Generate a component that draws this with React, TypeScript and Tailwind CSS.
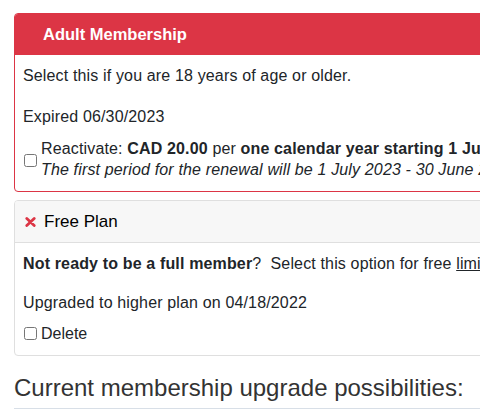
import React from "react";

export default function App() {
  return (
    <div className="w-[480px] h-[409px] overflow-hidden bg-white text-[#212529] text-[16px] leading-[21px]" style={{ fontFamily: '"Liberation Sans", Arial, sans-serif' }}>
      <div className="pl-[14px] pt-[13px] w-[640px]">
        <div className="border border-[#dc3545] rounded-[4px] overflow-hidden">
          <div className="bg-[#dc3545] text-white font-bold text-[16.5px] h-[41px] flex items-center pl-[28px]">
            Adult Membership
          </div>
          <div className="px-[8px] pt-[10px] pb-[11px]">
            <p className="tracking-[0.15px]">Select this if you are 18 years of age or older.</p>
            <p className="mt-[20px] tracking-[0.15px]">Expired 06/30/2023</p>
            <label className="mt-[11px] flex items-center gap-[4px]">
              <input type="checkbox" className="w-[13px] h-[13px] ml-[1px] mt-[2px] shrink-0" />
              <span className="block whitespace-nowrap tracking-[0.15px]">
                Reactivate: <b>CAD 20.00</b> per <b>one calendar year starting 1 July</b>
                <br />
                <i>The first period for the renewal will be 1 July 2023 - 30 June 2024</i>
              </span>
            </label>
          </div>
        </div>

        <div className="mt-[8px] border border-[#dfdfdf] rounded-[4px] overflow-hidden">
          <div className="bg-[#f7f7f7] border-b border-[#dfdfdf] h-[42px] flex items-center pl-[9px] text-[17px] text-black">
            <svg width="11" height="10" viewBox="0 0 11 10" className="mr-[8px] ml-[1px] mt-[1px]">
              <path d="M1.8 1.5 L9.2 8.5 M9.2 1.5 L1.8 8.5" stroke="#dc3545" strokeWidth="2.8" strokeLinecap="round" />
            </svg>
            Free Plan
          </div>
          <div className="px-[8px] pt-[10px] pb-[11px]">
            <p className="whitespace-nowrap tracking-[0.15px]">
              <b>Not ready to be a full member</b>?&nbsp; Select this option for free <u>limited access</u>
            </p>
            <p className="mt-[18px] tracking-[0.15px]">Upgraded to higher plan on 04/18/2022</p>
            <label className="mt-[10px] flex items-center gap-[4px]">
              <input type="checkbox" className="w-[13px] h-[13px] ml-[1px] shrink-0" />
              <span>Delete</span>
            </label>
          </div>
        </div>

        <h2 className="mt-[18px] text-[24px] leading-[28px] text-[#333]">Current membership upgrade possibilities:</h2>
        <div className="mt-[6px] border-t border-[#d8dfe7]"></div>
      </div>
    </div>
  );
}
